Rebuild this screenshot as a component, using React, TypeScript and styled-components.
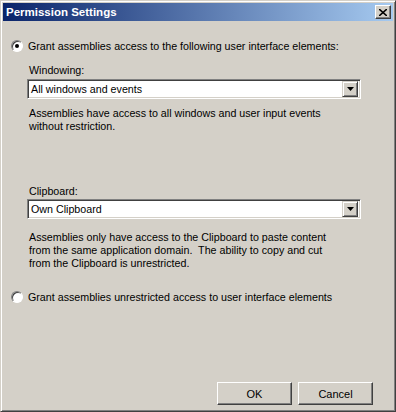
import React from "react";
import styled, { createGlobalStyle } from "styled-components";

const GlobalStyle = createGlobalStyle`
  html, body {
    margin: 0;
    padding: 0;
    background: #d4d0c8;
  }
  * {
    box-sizing: border-box;
  }
`;

const Window = styled.div`
  width: 396px;
  height: 412px;
  display: flex;
  flex-direction: column;
  background: #d4d0c8;
  border-top: 1px solid #d4d0c8;
  border-left: 1px solid #d4d0c8;
  border-right: 1px solid #404040;
  border-bottom: 1px solid #404040;
  box-shadow: inset 1px 1px 0 #ffffff, inset -1px -1px 0 #808080;
  padding: 2px;
  font-family: "Liberation Sans", Arial, sans-serif;
  font-size: 10.7px;
  color: #000;
  white-space: nowrap;
`;

const TitleBar = styled.div`
  height: 18px;
  display: flex;
  align-items: center;
  justify-content: space-between;
  padding: 0 2px 0 3px;
  background: linear-gradient(to right, #0a246a, #a6caf0);
  color: #fff;
  font-weight: bold;
  font-size: 11.5px;
`;

const CloseButton = styled.div`
  width: 16px;
  height: 14px;
  display: flex;
  align-items: center;
  justify-content: center;
  background: #d4d0c8;
  border-top: 1px solid #ffffff;
  border-left: 1px solid #ffffff;
  border-right: 1px solid #404040;
  border-bottom: 1px solid #404040;
  box-shadow: inset -1px -1px 0 #808080;
`;

const Body = styled.div`
  flex: 1;
  display: flex;
  flex-direction: column;
  padding: 18px 8px 0 8px;
`;

const RadioRow = styled.label<{ $top?: number }>`
  display: flex;
  align-items: center;
  gap: 5px;
  height: 13px;
  margin-top: ${(p) => p.$top ?? 0}px;
`;

const RadioCircle = styled.span<{ $checked?: boolean }>`
  width: 12px;
  height: 12px;
  border-radius: 50%;
  background: #fff;
  border: 1px solid;
  border-color: #808080 #ffffff #ffffff #808080;
  box-shadow: inset 1px 1px 0 #404040;
  display: flex;
  align-items: center;
  justify-content: center;
  flex: none;
  &::after {
    content: "";
    width: 4px;
    height: 4px;
    border-radius: 50%;
    background: ${(p) => (p.$checked ? "#000" : "transparent")};
  }
`;

const Group = styled.div<{ $top: number }>`
  display: flex;
  flex-direction: column;
  margin: ${(p) => p.$top}px 24px 0 16px;
`;

const FieldLabel = styled.div`
  padding-left: 2px;
  line-height: 13px;
`;

const Combo = styled.div<{ $top: number }>`
  margin-top: ${(p) => p.$top}px;
  height: 20px;
  display: flex;
  align-items: center;
  justify-content: space-between;
  background: #fff;
  border: 1px solid;
  border-color: #808080 #ffffff #ffffff #808080;
  box-shadow: inset 1px 1px 0 #404040, inset -1px -1px 0 #d4d0c8;
  padding: 2px 2px 2px 3px;
`;

const ComboButton = styled.div`
  width: 16px;
  height: 16px;
  display: flex;
  align-items: center;
  justify-content: center;
  background: #d4d0c8;
  border-top: 1px solid #d4d0c8;
  border-left: 1px solid #d4d0c8;
  border-right: 1px solid #404040;
  border-bottom: 1px solid #404040;
  box-shadow: inset 1px 1px 0 #ffffff, inset -1px -1px 0 #808080;
`;

const Description = styled.div<{ $top: number }>`
  margin-top: ${(p) => p.$top}px;
  padding-left: 2px;
  line-height: 13px;
`;

const Footer = styled.div`
  margin-top: auto;
  display: flex;
  justify-content: flex-end;
  gap: 6px;
  padding: 0 12px 4px 0;
`;

const Button = styled.button`
  width: 75px;
  height: 23px;
  background: #d4d0c8;
  font-family: inherit;
  font-size: 11px;
  color: #000;
  border-top: 1px solid #ffffff;
  border-left: 1px solid #ffffff;
  border-right: 1px solid #404040;
  border-bottom: 1px solid #404040;
  box-shadow: inset -1px -1px 0 #808080;
  padding: 0;
`;

function Arrow() {
  return (
    <svg width="7" height="4" viewBox="0 0 7 4">
      <path d="M0 0h7L3.5 4z" fill="#000" />
    </svg>
  );
}

export default function App() {
  return (
    <>
      <GlobalStyle />
      <Window>
        <TitleBar>
          <span>Permission Settings</span>
          <CloseButton>
            <svg width="8" height="7" viewBox="0 0 8 7">
              <path d="M0 0l8 7M8 0L0 7" stroke="#000" strokeWidth="1.6" />
            </svg>
          </CloseButton>
        </TitleBar>
        <Body>
          <RadioRow>
            <RadioCircle $checked />
            Grant assemblies access to the following user interface elements:
          </RadioRow>
          <Group $top={12}>
            <FieldLabel>Windowing:</FieldLabel>
            <Combo $top={2}>
              <span>All windows and events</span>
              <ComboButton>
                <Arrow />
              </ComboButton>
            </Combo>
            <Description $top={8}>
              Assemblies have access to all windows and user input events
              <br />
              without restriction.
            </Description>
          </Group>
          <Group $top={52}>
            <FieldLabel>Clipboard:</FieldLabel>
            <Combo $top={1}>
              <span>Own Clipboard</span>
              <ComboButton>
                <Arrow />
              </ComboButton>
            </Combo>
            <Description $top={12}>
              Assemblies only have access to the Clipboard to paste content
              <br />
              from the same application domain.&nbsp; The ability to copy and cut
              <br />
              from the Clipboard is unrestricted.
            </Description>
          </Group>
          <RadioRow $top={20}>
            <RadioCircle />
            Grant assemblies unrestricted access to user interface elements
          </RadioRow>
          <Footer>
            <Button>OK</Button>
            <Button>Cancel</Button>
          </Footer>
        </Body>
      </Window>
    </>
  );
}
